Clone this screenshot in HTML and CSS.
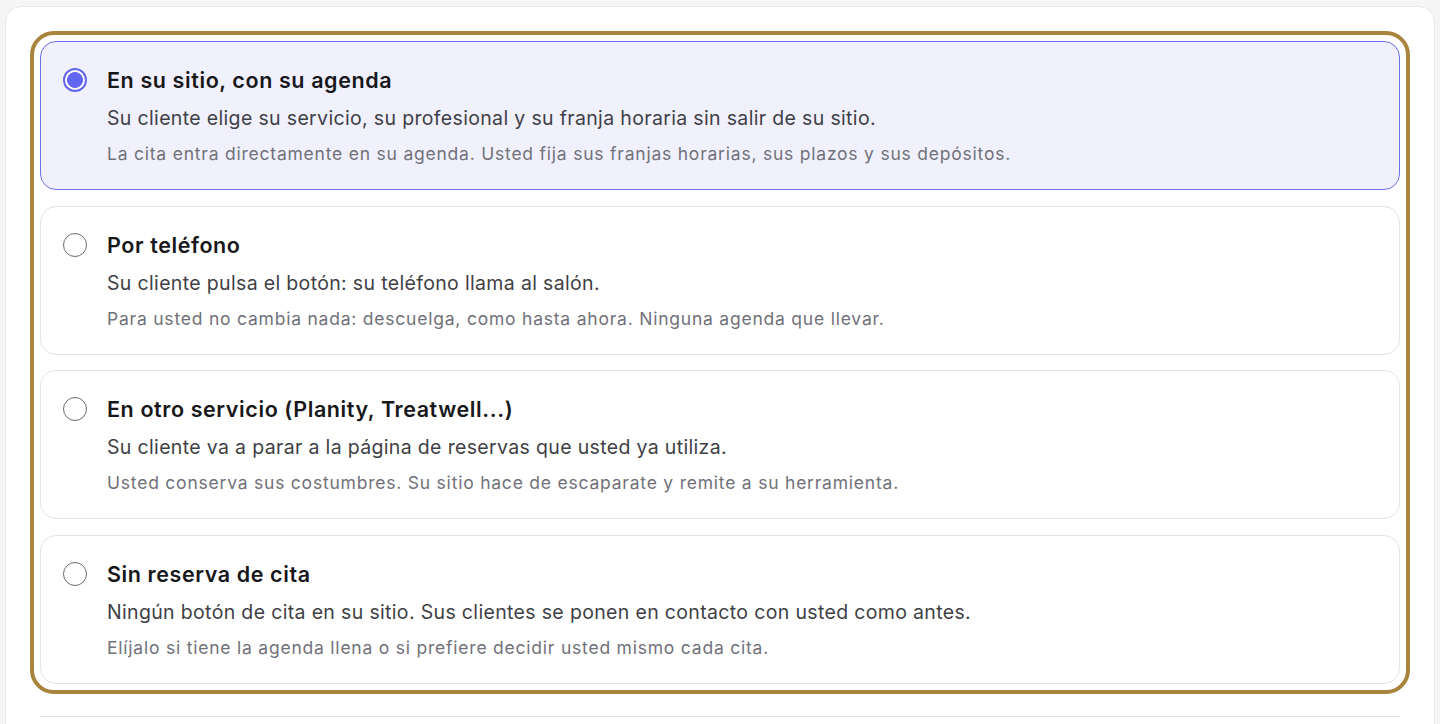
FILE: index.html
```html
<!DOCTYPE html>
<html lang="es">
<head>
<meta charset="utf-8">
<title>Reserva de citas</title>
<link rel="stylesheet" href="styles.css">
</head>
<body>
<div class="panel">
  <div class="options" role="radiogroup">
    <label class="option selected">
      <span class="radio checked"></span>
      <span class="text">
        <span class="title">En su sitio, con su agenda</span>
        <span class="desc">Su cliente elige su servicio, su profesional y su franja horaria sin salir de su sitio.</span>
        <span class="note">La cita entra directamente en su agenda. Usted fija sus franjas horarias, sus plazos y sus depósitos.</span>
      </span>
    </label>
    <label class="option">
      <span class="radio"></span>
      <span class="text">
        <span class="title">Por teléfono</span>
        <span class="desc">Su cliente pulsa el botón: su teléfono llama al salón.</span>
        <span class="note">Para usted no cambia nada: descuelga, como hasta ahora. Ninguna agenda que llevar.</span>
      </span>
    </label>
    <label class="option">
      <span class="radio"></span>
      <span class="text">
        <span class="title">En otro servicio (Planity, Treatwell...)</span>
        <span class="desc">Su cliente va a parar a la página de reservas que usted ya utiliza.</span>
        <span class="note">Usted conserva sus costumbres. Su sitio hace de escaparate y remite a su herramienta.</span>
      </span>
    </label>
    <label class="option">
      <span class="radio"></span>
      <span class="text">
        <span class="title">Sin reserva de cita</span>
        <span class="desc">Ningún botón de cita en su sitio. Sus clientes se ponen en contacto con usted como antes.</span>
        <span class="note">Elíjalo si tiene la agenda llena o si prefiere decidir usted mismo cada cita.</span>
      </span>
    </label>
  </div>
  <div class="divider"></div>
</div>
</body>
</html>
```
FILE: styles.css
```css
html, body {
  margin: 0;
  padding: 0;
  background: #f5f5f5;
  font-family: Inter, "Noto Sans", "Liberation Sans", sans-serif;
}

.panel {
  margin: 6px 5px 0 5px;
  background: #ffffff;
  border: 1px solid #e8e8e8;
  border-radius: 16px;
  padding: 34px 34px 40px 34px;
  min-height: 760px;
  box-sizing: border-box;
}

.options {
  display: flex;
  flex-direction: column;
  gap: 15.5px;
  outline: 4px solid #a8843c;
  outline-offset: 6px;
  border-radius: 14px;
}

.option {
  display: flex;
  align-items: flex-start;
  gap: 20px;
  padding: 24px 22px 23px 22px;
  border: 1px solid #e4e4e7;
  border-radius: 16px;
  background: #ffffff;
  cursor: pointer;
}

.option.selected {
  background: #f1f1fe;
  border-color: #6d70e6;
}

.radio {
  flex: 0 0 auto;
  width: 24px;
  height: 24px;
  margin-top: 2px;
  box-sizing: border-box;
  border: 1.5px solid #6b6b6b;
  border-radius: 50%;
  background: #ffffff;
}

.radio.checked {
  border: 2px solid #6366f1;
  background: radial-gradient(circle, #6366f1 0 7.6px, #ffffff 8.2px);
}

.text {
  display: flex;
  flex-direction: column;
}

.title {
  font-size: 21.5px;
  line-height: 28px;
  font-weight: 600;
  letter-spacing: 0.6px;
  color: #18181b;
}

.desc {
  margin-top: 10px;
  font-size: 19.5px;
  line-height: 28px;
  letter-spacing: 0.34px;
  color: #3f3f46;
}

.note {
  margin-top: 10px;
  font-size: 17.5px;
  line-height: 24px;
  letter-spacing: 0.78px;
  color: #71717a;
}

.divider {
  margin-top: 32px;
  height: 1px;
  background: #e4e4e7;
}
```
